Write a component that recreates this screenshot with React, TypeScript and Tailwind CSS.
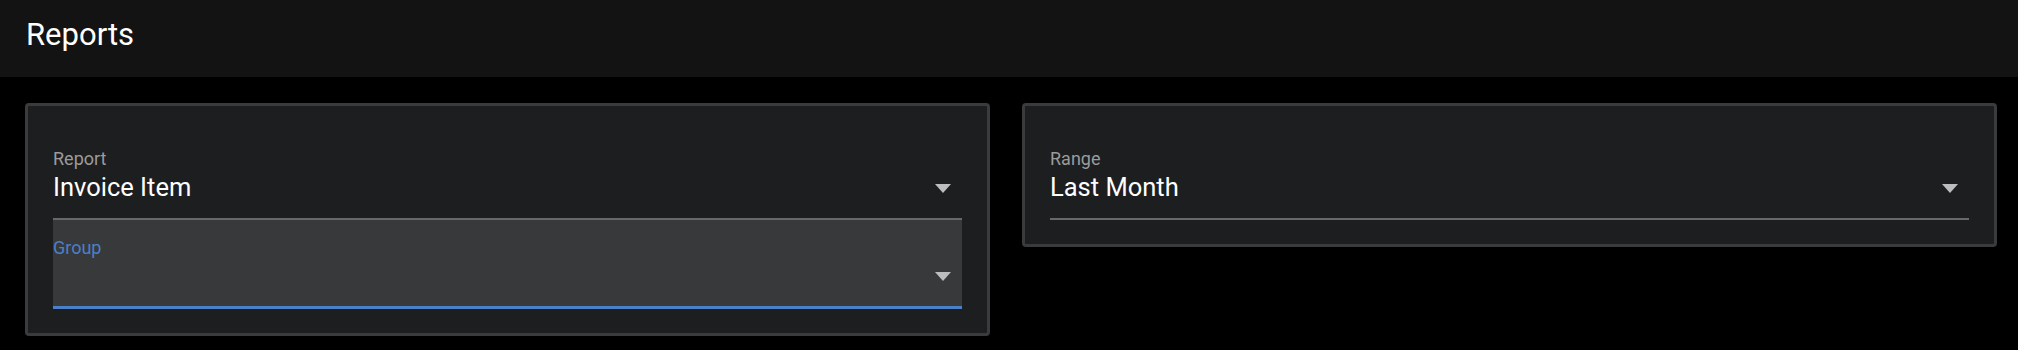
import React from "react";

function Arrow() {
  return (
    <svg width="16" height="9" viewBox="0 0 16 9" className="shrink-0">
      <path d="M0 0 H16 L8 9 Z" fill="#bdbdbd" />
    </svg>
  );
}

function SelectField({ label, value }: { label: string; value: string }) {
  return (
    <div className="border-b-2 border-[#676869]">
      <div className="text-[18px] leading-[21px] text-[#9b9b9b]">{label}</div>
      <div className="mt-[4px] flex items-center justify-between pb-[16px]">
        <span className="text-[25.5px] leading-[29px] text-white">{value}</span>
        <span className="mr-[11px] mt-[1px]">
          <Arrow />
        </span>
      </div>
    </div>
  );
}

export default function App() {
  return (
    <div
      className="h-[350px] w-full bg-black"
      style={{ fontFamily: "Roboto, 'Noto Sans', sans-serif" }}
    >
      <header className="flex h-[77px] items-center bg-[#131313] px-[26px] pb-[7px]">
        <h1 className="text-[31px] leading-[36px] text-white">Reports</h1>
      </header>
      <main className="grid grid-cols-[965px_975px] items-start gap-[32px] pl-[25px] pt-[26px]">
        <section className="rounded-[4px] border-[3px] border-[#3a3b3d] bg-[#1d1e20] px-[25px] pb-[24px] pt-[42px]">
          <SelectField label="Report" value="Invoice Item" />
          <div className="flex h-[89px] flex-col border-b-[3px] border-[#4a80c8] bg-[#38393b]">
            <div className="pt-[17px] text-[18px] leading-[21px] text-[#4a80c8]">Group</div>
            <div className="flex justify-end pr-[11px] pt-[14px]">
              <Arrow />
            </div>
          </div>
        </section>
        <section className="rounded-[4px] border-[3px] border-[#3a3b3d] bg-[#1d1e20] px-[25px] pb-[24px] pt-[42px]">
          <SelectField label="Range" value="Last Month" />
        </section>
      </main>
    </div>
  );
}
